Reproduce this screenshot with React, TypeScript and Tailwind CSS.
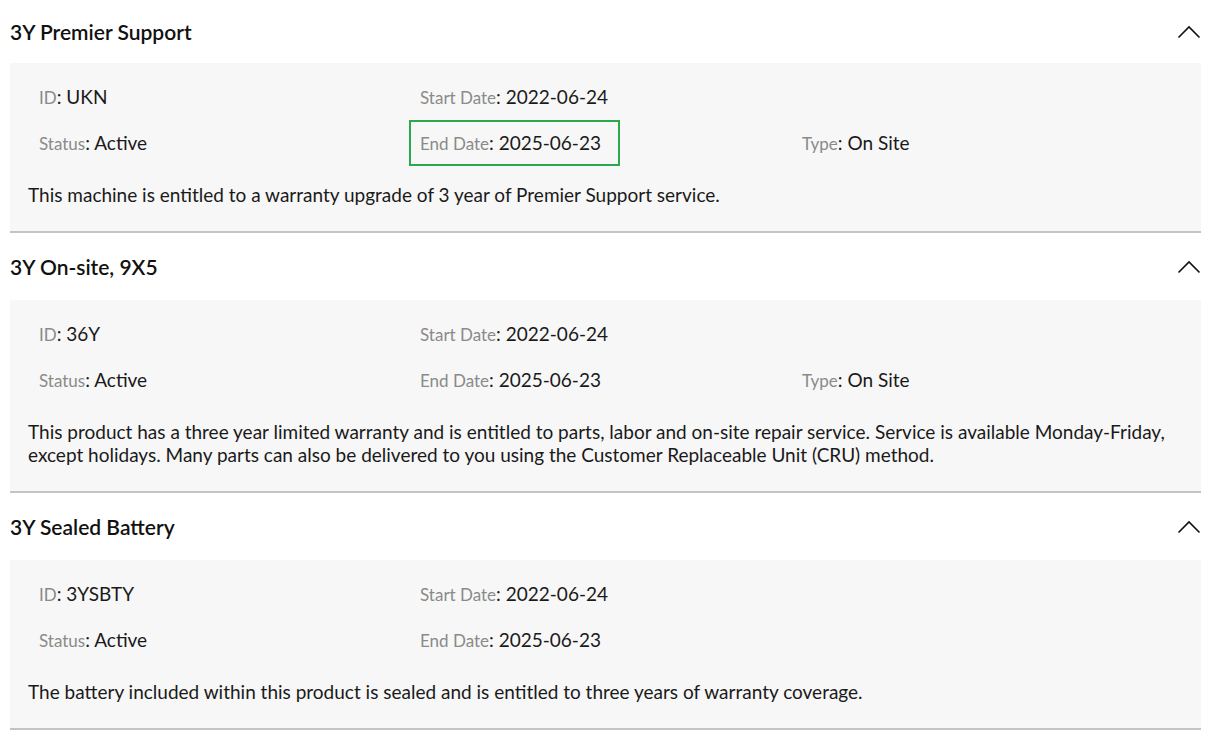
import React from 'react';

type Field = { label: string; value: string; highlight?: boolean };

type Warranty = {
  title: string;
  rows: (Field | null)[][];
  description: string;
};

const WARRANTIES: Warranty[] = [
  {
    title: '3Y Premier Support',
    rows: [
      [{ label: 'ID', value: 'UKN' }, { label: 'Start Date', value: '2022-06-24' }, null],
      [
        { label: 'Status', value: 'Active' },
        { label: 'End Date', value: '2025-06-23', highlight: true },
        { label: 'Type', value: 'On Site' },
      ],
    ],
    description: 'This machine is entitled to a warranty upgrade of 3 year of Premier Support service.',
  },
  {
    title: '3Y On-site, 9X5',
    rows: [
      [{ label: 'ID', value: '36Y' }, { label: 'Start Date', value: '2022-06-24' }, null],
      [
        { label: 'Status', value: 'Active' },
        { label: 'End Date', value: '2025-06-23' },
        { label: 'Type', value: 'On Site' },
      ],
    ],
    description:
      'This product has a three year limited warranty and is entitled to parts, labor and on-site repair service. Service is available Monday-Friday, except holidays. Many parts can also be delivered to you using the Customer Replaceable Unit (CRU) method.',
  },
  {
    title: '3Y Sealed Battery',
    rows: [
      [{ label: 'ID', value: '3YSBTY' }, { label: 'Start Date', value: '2022-06-24' }, null],
      [{ label: 'Status', value: 'Active' }, { label: 'End Date', value: '2025-06-23' }, null],
    ],
    description: 'The battery included within this product is sealed and is entitled to three years of warranty coverage.',
  },
];

function ChevronUp() {
  return (
    <svg width="24" height="14" viewBox="0 0 24 14" fill="none" className="block">
      <path d="M1.5 12.5 L12 2 L22.5 12.5" stroke="#111" strokeWidth="1.6" />
    </svg>
  );
}

function FieldCell({ field }: { field: Field | null }) {
  if (!field) return <div />;
  return (
    <div className="relative h-[24px] leading-[24px] whitespace-nowrap">
      {field.highlight && (
        <div className="absolute left-[-11px] top-[-11px] h-[46px] w-[211px] border-2 border-[#2ea84f]" />
      )}
      <span className="text-[17px] text-[#8a8a8a]">{field.label}</span>
      <span className="text-[19px] text-[#1a1a1a]">: {field.value}</span>
    </div>
  );
}

function WarrantySection({ warranty, first }: { warranty: Warranty; first: boolean }) {
  return (
    <section>
      <div className={`flex items-center justify-between ${first ? 'h-[63px]' : 'h-[67px]'}`}>
        <h2 className="text-[21px] font-semibold text-[#111]">{warranty.title}</h2>
        <ChevronUp />
      </div>
      <div className="border-b-2 border-[#c4c4c4] bg-[#f7f7f7] pt-[22px] pb-[25px]">
        <div className="flex flex-col gap-[22px] pl-[29px]">
          {warranty.rows.map((row, i) => (
            <div key={i} className="grid grid-cols-[381px_382px_1fr]">
              {row.map((field, j) => (
                <FieldCell key={j} field={field} />
              ))}
            </div>
          ))}
        </div>
        <p className="mt-[28px] pl-[18px] pr-[20px] text-[19px] leading-[23px] text-[#1a1a1a]">
          {warranty.description}
        </p>
      </div>
    </section>
  );
}

export default function App() {
  return (
    <div className="min-h-screen bg-white font-['Lato','Noto_Sans',sans-serif]">
      <div className="ml-[10px] w-[1191px]">
        {WARRANTIES.map((w, i) => (
          <WarrantySection key={w.title} warranty={w} first={i === 0} />
        ))}
      </div>
    </div>
  );
}
